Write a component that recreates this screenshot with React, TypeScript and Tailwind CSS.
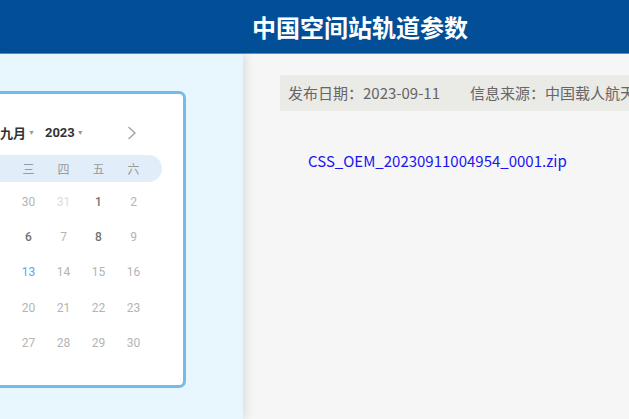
import React from "react";

const cjk = '"Noto Sans CJK SC", "Noto Sans", sans-serif';

type Day = { n: number; tone: "muted" | "faint" | "dark" | "today" } | null;

// The first three columns (日 一 二) sit outside the panel's left edge, so they stay empty.
const weeks: Day[][] = [
  [
    null,
    null,
    null,
    { n: 30, tone: "muted" },
    { n: 31, tone: "faint" },
    { n: 1, tone: "dark" },
    { n: 2, tone: "muted" },
  ],
  [
    null,
    null,
    null,
    { n: 6, tone: "dark" },
    { n: 7, tone: "muted" },
    { n: 8, tone: "dark" },
    { n: 9, tone: "muted" },
  ],
  [
    null,
    null,
    null,
    { n: 13, tone: "today" },
    { n: 14, tone: "muted" },
    { n: 15, tone: "muted" },
    { n: 16, tone: "muted" },
  ],
  [
    null,
    null,
    null,
    { n: 20, tone: "muted" },
    { n: 21, tone: "muted" },
    { n: 22, tone: "muted" },
    { n: 23, tone: "muted" },
  ],
  [
    null,
    null,
    null,
    { n: 27, tone: "muted" },
    { n: 28, tone: "muted" },
    { n: 29, tone: "muted" },
    { n: 30, tone: "muted" },
  ],
];

const toneClass = {
  muted: "text-[#b4b4b4]",
  faint: "text-[#dcdcdc]",
  dark: "text-[#727272] font-medium",
  today: "text-[#5aa8ef]",
} as const;

const weekdays = ["", "", "", "三", "四", "五", "六"];

function Calendar() {
  return (
    <div className="ml-[-118px] mt-[37px] w-[304px] rounded-[7px] border-[3px] border-[#74bbe9] bg-white px-[21px] pt-[24px] pb-[24px]">
      <div className="flex h-[30px] items-center pl-[94px] pr-[24px]">
        <span className="text-[13px] font-bold text-[#333]" style={{ fontFamily: cjk }}>
          九月
        </span>
        <span className="ml-[2px] text-[7px] text-[#999]">▼</span>
        <span className="ml-[10px] text-[13px] font-bold text-[#333]" style={{ fontFamily: '"Roboto", sans-serif' }}>
          2023
        </span>
        <span className="ml-[2px] text-[7px] text-[#999]">▼</span>
        <svg className="ml-auto" width="12" height="14" viewBox="0 0 12 14" fill="none">
          <path d="M3 1.5 L9 7 L3 12.5" stroke="#a6a6a6" strokeWidth="1.6" strokeLinecap="round" strokeLinejoin="round" />
        </svg>
      </div>
      <div className="mt-[7px] flex h-[27px] w-[256px] items-center rounded-full bg-[#e1eef9]">
        <div className="grid w-[245px] grid-cols-7">
          {weekdays.map((w, i) => (
            <span key={i} className="text-center text-[12px] text-[#9a9a9a]" style={{ fontFamily: cjk }}>
              {w}
            </span>
          ))}
        </div>
      </div>
      <div className="mt-[2px] w-[245px]" style={{ fontFamily: '"Roboto", sans-serif' }}>
        {weeks.map((row, i) => (
          <div key={i} className="grid h-[35.4px] grid-cols-7 items-center">
            {row.map((d, j) =>
              d ? (
                <span key={j} className={`text-center text-[12px] ${toneClass[d.tone]}`}>
                  {d.n}
                </span>
              ) : (
                <span key={j} />
              )
            )}
          </div>
        ))}
      </div>
    </div>
  );
}

export default function App() {
  return (
    <div className="flex h-[419px] w-[629px] flex-col overflow-hidden bg-[#f6f6f6]">
      <header className="flex h-[54px] shrink-0 items-center border-b border-[#5c8fc4] bg-[#034f97] pl-[252px]">
        <h1 className="text-[24px] font-bold leading-none text-white" style={{ fontFamily: cjk }}>
          中国空间站轨道参数
        </h1>
      </header>
      <div className="flex min-h-0 flex-1">
        <aside className="relative z-10 w-[243px] shrink-0 bg-[#e8f6fe] shadow-[3px_0_9px_rgba(0,0,0,0.1)]">
          <Calendar />
        </aside>
        <main className="min-w-0 flex-1 overflow-hidden pl-[37px] pt-[21px]">
          <div
            className="flex h-[36px] items-center gap-[30px] whitespace-nowrap bg-[#eaeae7] pl-[8px] text-[15px] text-[#666]"
            style={{ fontFamily: cjk }}
          >
            <span>发布日期：2023-09-11</span>
            <span>信息来源：中国载人航天</span>
          </div>
          <div className="mt-[38px] pl-[28px]">
            <a className="text-[15px] text-[#1a14f0]" style={{ fontFamily: cjk }}>
              CSS_OEM_20230911004954_0001.zip
            </a>
          </div>
        </main>
      </div>
    </div>
  );
}
